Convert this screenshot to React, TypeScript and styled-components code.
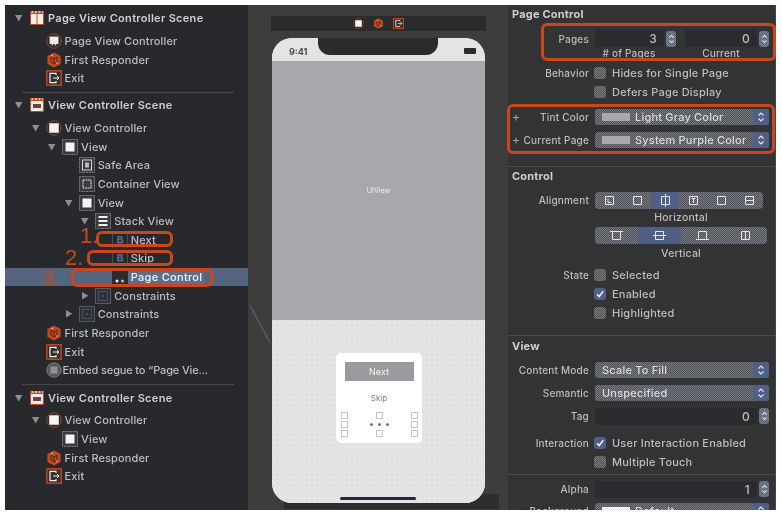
import React from "react";
import styled, { createGlobalStyle } from "styled-components";

const Global = createGlobalStyle`
  html, body { margin: 0; padding: 0; background: #fff; }
  body { font-family: "Inter", "Liberation Sans", sans-serif; }
`;

const ORANGE = "#c8481c";
const BLUE = "#4f5f85";

const Page = styled.div`
  position: relative;
  width: 782px;
  height: 520px;
  overflow: hidden;
  background: #fff;
  box-sizing: border-box;
  padding: 5px 6px 10px 5px;
  display: flex;
  filter: blur(0.4px);
`;

/* ---------- outline ---------- */
const Outline = styled.aside`
  width: 243px;
  flex: none;
  background: #28292c;
  padding-top: 4px;
  box-sizing: border-box;
`;
const Row = styled.div<{ $level: number; $selected?: boolean; $scene?: boolean; $mt?: number }>`
  height: 18.66px;
  margin-top: ${(p) => p.$mt ?? 0}px;
  display: flex;
  align-items: center;
  padding-left: ${(p) => 8 + p.$level * 16.55}px;
  background: ${(p) => (p.$selected ? "#55647f" : "transparent")};
  color: ${(p) => (p.$selected ? "#f2f2f4" : p.$scene ? "#cfcfd0" : "#bdbdbe")};
  font-size: 11px;
  font-weight: ${(p) => (p.$scene ? 600 : 500)};
  letter-spacing: ${(p) => (p.$scene ? "0.3px" : "0.12px")};
  white-space: nowrap;
`;
const Caret = styled.span`
  width: 16px;
  flex: none;
  display: flex;
  padding-left: 2px;
  box-sizing: border-box;
`;
const Label = styled.span<{ $selected?: boolean; $tight?: boolean }>`
  margin-left: ${(p) => (p.$tight ? 1 : 3)}px;
  ${(p) => p.$tight && "letter-spacing:-0.15px;"}
  ${(p) => p.$selected && "background:#5f6d8a;padding:1px 2px 1px 3px;margin-left:0;letter-spacing:0.3px;"}
`;
const Divider = styled.div<{ $mt: number; $mb: number }>`
  height: 1px;
  margin: ${(p) => p.$mt}px 14px ${(p) => p.$mb}px 17px;
  background: #47484a;
`;

const Tri = ({ open }: { open: boolean }) => (
  <svg width="8" height="8" viewBox="0 0 8 8">
    <path d={open ? "M0 1h7.4L3.7 7.5z" : "M1 0l6.4 3.8L1 7.6z"} fill="#8f8f90" />
  </svg>
);

type Kind = "scene" | "pvcScene" | "pvc" | "vc" | "fr" | "exit" | "view" | "safe" | "container" | "stack" | "button" | "dots" | "constraints" | "embed";

const Glyph = ({ kind }: { kind: Kind }) => {
  const box = <rect x=".5" y=".5" width="15" height="15" fill="#3a3b3e" stroke="#77787b" strokeDasharray="2 .6" />;
  switch (kind) {
    case "scene":
    case "pvcScene":
      return (
        <svg width="16" height="16" viewBox="0 0 16 16">
          <rect x="1" y="1" width="14" height="14" rx="1" fill={ORANGE} />
          <path d="M2.5 2h2M6 2h2M9.5 2h2M13 2h1" stroke="#f0dccf" strokeWidth="1.4" />
          {kind === "scene" ? (
            <>
              <rect x="2" y="4" width="12" height="10" fill="#ededed" />
              <rect x="4" y="7" width="8" height="4" fill="#5a4a42" />
            </>
          ) : (
            <>
              <rect x="2" y="4" width="5.5" height="10" fill="#f0f0f0" />
              <rect x="8.5" y="4" width="5.5" height="10" fill="#f0f0f0" />
            </>
          )}
        </svg>
      );
    case "pvc":
      return (
        <svg width="16" height="16" viewBox="0 0 16 16">
          <circle cx="8" cy="8" r="7.2" fill="#302d2c" stroke={ORANGE} strokeDasharray="1.6 .6" />
          <rect x="3.6" y="3.6" width="8.8" height="7.4" fill="#efefef" />
          <circle cx="6.5" cy="11.8" r=".8" fill="#efefef" />
          <circle cx="9.5" cy="11.8" r=".8" fill="#efefef" />
        </svg>
      );
    case "vc":
      return (
        <svg width="16" height="16" viewBox="0 0 16 16">
          <circle cx="8" cy="8" r="7.2" fill="#302d2c" stroke={ORANGE} strokeDasharray="1.6 .6" />
          <rect x="3.2" y="3.2" width="9.6" height="9.6" rx=".8" fill="#f4f4f4" />
        </svg>
      );
    case "fr":
      return (
        <svg width="16" height="16" viewBox="0 0 16 16">
          <path d="M8 .6l6.6 3.4v8L8 15.4 1.4 12V4z" fill={ORANGE} />
          <path d="M5 5l3 2 3-2M8 7v4M5 5v5l3 2 3-2V5" fill="none" stroke="#3d2a22" />
          <circle cx="6" cy="3.4" r=".8" fill="#eec4ad" />
          <circle cx="11" cy="11" r=".8" fill="#eec4ad" />
        </svg>
      );
    case "exit":
      return (
        <svg width="16" height="16" viewBox="0 0 16 16">
          <rect x=".8" y=".8" width="14.4" height="14.4" fill="#34302e" stroke={ORANGE} strokeWidth="1.4" />
          <path d="M10 5V3.4H4v9.2h6V11" fill="none" stroke="#f0f0f0" strokeWidth="1.2" />
          <path d="M7 8h6M11 6l2 2-2 2" fill="none" stroke="#f0f0f0" />
        </svg>
      );
    case "view":
      return (
        <svg width="16" height="16" viewBox="0 0 16 16">
          {box}
          <rect x="3.5" y="3.5" width="9" height="9" fill="#f4f4f4" />
        </svg>
      );
    case "safe":
      return (
        <svg width="16" height="16" viewBox="0 0 16 16">
          {box}
          <rect x="3.5" y="3" width="9" height="10" fill="none" stroke="#d8d8d8" />
          <rect x="6" y="5.5" width="4" height="5" fill="#bbb" />
        </svg>
      );
    case "container":
      return (
        <svg width="16" height="16" viewBox="0 0 16 16">
          {box}
          <rect x="4" y="4" width="8" height="8" fill="none" stroke="#dcdcdc" strokeDasharray="2 .5" />
        </svg>
      );
    case "stack":
      return (
        <svg width="16" height="16" viewBox="0 0 16 16">
          {box}
          <rect x="3.5" y="3" width="9" height="2" fill="#f2f2f2" />
          <rect x="3.5" y="7" width="9" height="2" fill="#f2f2f2" />
          <rect x="3.5" y="11" width="9" height="2" fill="#f2f2f2" />
        </svg>
      );
    case "button":
      return (
        <svg width="16" height="16" viewBox="0 0 16 16">
          <path d="M.5 0v16M15.5 0v16" stroke="#4a4b4f" />
          <path d="M5.2 4h3.6a1.8 1.8 0 011 3.4 2 2 0 01-.6 4H5.2zM6.8 5.4v1.4h1.6a.7.7 0 000-1.4zM6.8 8.2v1.8h1.9a.9.9 0 000-1.8z" fill="#566894" fillRule="evenodd" />
        </svg>
      );
    case "dots":
      return (
        <svg width="16" height="16" viewBox="0 0 16 16">
          <rect width="16" height="16" fill="#2b2c30" />
          <circle cx="5" cy="12" r="1.5" fill="#f2f2f2" />
          <circle cx="10.5" cy="12" r="1.5" fill="#bbb" />
        </svg>
      );
    case "constraints":
      return (
        <svg width="16" height="16" viewBox="0 0 16 16">
          <rect x=".5" y=".5" width="15" height="15" fill="#2f3138" stroke="#545a6c" />
          <rect x="3.5" y="3.5" width="9" height="9" fill="none" stroke="#5d6f9c" strokeDasharray="1 1" />
          <rect x="7.5" y="7.5" width="1" height="1" fill="#8fa0c8" />
        </svg>
      );
    case "embed":
      return (
        <svg width="16" height="16" viewBox="0 0 16 16">
          <circle cx="8" cy="8" r="7.2" fill="#56575a" stroke="#77787b" />
          <rect x="4" y="4" width="8" height="8" fill="#909194" stroke="#5c5d60" />
        </svg>
      );
  }
};

const IconBox = styled.span`
  width: 16px;
  height: 16px;
  flex: none;
  display: block;
  & > svg { display: block; }
`;

type Node = { t: string; k: Kind; l: number; c?: "open" | "closed"; sel?: boolean; scene?: boolean; mt?: number; tight?: boolean };

const group1: Node[] = [
  { t: "Page View Controller Scene", k: "pvcScene", l: 0, c: "open", scene: true },
  { t: "Page View Controller", k: "pvc", l: 1, mt: 4 },
  { t: "First Responder", k: "fr", l: 1 },
  { t: "Exit", k: "exit", l: 1 },
];
const group2: Node[] = [
  { t: "View Controller Scene", k: "scene", l: 0, c: "open", scene: true },
  { t: "View Controller", k: "vc", l: 1, c: "open", mt: 3.8 },
  { t: "View", k: "view", l: 2, c: "open" },
  { t: "Safe Area", k: "safe", l: 3 },
  { t: "Container View", k: "container", l: 3 },
  { t: "View", k: "view", l: 3, c: "open" },
  { t: "Stack View", k: "stack", l: 4, c: "open" },
  { t: "Next", k: "button", l: 5 },
  { t: "Skip", k: "button", l: 5 },
  { t: "Page Control", k: "dots", l: 5, sel: true },
  { t: "Constraints", k: "constraints", l: 4, c: "closed" },
  { t: "Constraints", k: "constraints", l: 3, c: "closed" },
  { t: "First Responder", k: "fr", l: 1 },
  { t: "Exit", k: "exit", l: 1 },
  { t: "Embed segue to “Page Vie...", k: "embed", l: 1, tight: true },
];
const group3: Node[] = [
  { t: "View Controller Scene", k: "scene", l: 0, c: "open", scene: true },
  { t: "View Controller", k: "vc", l: 1, c: "open", mt: 4 },
  { t: "View", k: "view", l: 2 },
  { t: "First Responder", k: "fr", l: 1 },
  { t: "Exit", k: "exit", l: 1 },
];

const Rows = ({ items }: { items: Node[] }) => (
  <>
    {items.map((n, i) => (
      <Row key={i} $level={n.l} $selected={n.sel} $scene={n.scene} $mt={n.mt}>
        <Caret>{n.c && <Tri open={n.c === "open"} />}</Caret>
        <IconBox><Glyph kind={n.k} /></IconBox>
        <Label $selected={n.sel} $tight={n.tight}>{n.t}</Label>
      </Row>
    ))}
  </>
);

/* ---------- canvas ---------- */
const Canvas = styled.main`
  position: relative;
  width: 260px;
  flex: none;
  background: #3e3d3b;
  padding: 11px 22px 0 23px;
  box-sizing: border-box;
  display: flex;
  flex-direction: column;
`;
const SceneDock = styled.div`
  height: 15px;
  background: #2a2b2d;
  display: flex;
  align-items: center;
  justify-content: center;
  gap: 9px;
  margin-bottom: 7px;
  flex: none;
`;
const DockIcon = styled.span`
  width: 11px;
  height: 11px;
  flex: none;
  & > svg { display: block; width: 11px; height: 11px; }
`;
const Phone = styled.div`
  position: relative;
  z-index: 1;
  width: 213px;
  height: 465px;
  margin-left: 1px;
  border-radius: 20px;
  overflow: hidden;
  background: #e3e3e3;
  display: flex;
  flex-direction: column;
  flex: none;
`;
const Status = styled.div`
  height: 23px;
  box-sizing: border-box;
  flex: none;
  background: #e4e4e4;
  display: flex;
  align-items: center;
  justify-content: space-between;
  padding: 3px 9px 0 17px;
  font-size: 9px;
  font-weight: 700;
  color: #4a4a4c;
`;
const Notch = styled.div`
  position: absolute;
  left: 46px;
  top: -1px;
  width: 120px;
  height: 18px;
  background: #2a2b2d;
  border-radius: 0 0 12px 12px;
`;
const Battery = styled.span`
  width: 12px;
  height: 6px;
  background: #2c2c2e;
  border-radius: 1px;
`;
const Gray = styled.div`
  height: 259px;
  flex: none;
  background: #a9a7ab;
  display: flex;
  align-items: center;
  justify-content: center;
  color: #f0f0f0;
  font-size: 7px;
`;
const Lower = styled.div`
  flex: 1;
  display: flex;
  flex-direction: column;
  align-items: center;
  padding-top: 33px;
  background-color: #e3e3e3;
  background-image: radial-gradient(circle, #f4f4f4 0.6px, transparent 0.8px);
  background-size: 5px 5px;
  position: relative;
`;
const Card = styled.div`
  width: 86px;
  height: 90px;
  background: #fff;
  border-radius: 5px;
  box-sizing: border-box;
  padding: 9px 8px 0 9px;
  display: flex;
  flex-direction: column;
  align-items: center;
`;
const NextBtn = styled.div`
  align-self: stretch;
  height: 19px;
  background: #9c9a9e;
  color: #f4f4f4;
  font-size: 9px;
  display: flex;
  align-items: center;
  justify-content: center;
`;
const SkipLabel = styled.div`
  font-size: 8px;
  color: #77777a;
  margin-top: 12px;
  line-height: 10px;
`;
const HandleGrid = styled.div`
  margin-top: 8px;
  width: 78px;
  display: grid;
  grid-template-columns: 8px 1fr 8px;
  grid-template-rows: repeat(3, 9px);
  align-items: center;
  justify-items: center;
`;
const Handle = styled.span`
  width: 7px;
  height: 7px;
  border: 1px solid #c4c4c4;
  box-sizing: border-box;
`;
const PageDots = styled.span`
  display: flex;
  gap: 5px;
`;
const PageDot = styled.span`
  width: 3px;
  height: 3px;
  border-radius: 50%;
  background: #77777a;
`;
const HomeBar = styled.div`
  position: absolute;
  left: 68px;
  bottom: 3px;
  width: 76px;
  height: 3px;
  background: #24283a;
  border-radius: 2px;
`;
const UnderBar = styled.div`
  position: absolute;
  left: 36px;
  top: 489px;
  width: 215px;
  height: 15px;
  background: #2d2d2f;
`;
const Segue = styled.svg`
  position: absolute;
  left: 0;
  top: 298px;
`;

/* ---------- inspector ---------- */
const dither = (a: string, b: string) =>
  `repeating-conic-gradient(${a} 0 25%, ${b} 0 50%) 0 0 / 2px 2px`;

const Inspector = styled.section`
  width: 268px;
  flex: none;
  overflow: hidden;
  background: ${dither("#2c2d2f", "#3a3a3b")};
  box-sizing: border-box;
  padding-left: 4px;
  border-right: 1px solid #3b4660;
  color: #bdbdbe;
  font-size: 11px;
  font-weight: 500;
  letter-spacing: 0.2px;
`;
const SectionTitle = styled.div<{ $mt: number }>`
  height: 18px;
  margin-top: ${(p) => p.$mt}px;
  display: flex;
  align-items: center;
  font-weight: 700;
  color: #cfcfd0;
`;
const Sep = styled.div<{ $mt: number }>`
  height: 1px;
  margin: ${(p) => p.$mt}px 0 0 -4px;
  background: #4b4b4c;
`;
const PropRow = styled.div<{ $mt: number; $h?: number }>`
  height: ${(p) => p.$h ?? 18}px;
  margin-top: ${(p) => p.$mt}px;
  display: grid;
  grid-template-columns: 77px 1fr;
  column-gap: 6px;
  align-items: center;
`;
const PropLabel = styled.span`
  display: flex;
  justify-content: space-between;
  align-items: center;
  white-space: nowrap;
  font-size: 10px;
`;
const Plus = styled.span`
  color: #a5a5a6;
  font-size: 12px;
  font-weight: 400;
`;
const Cell = styled.div`
  display: flex;
  align-items: center;
  min-width: 0;
  margin-right: 6px;
`;
const NumField = styled.div<{ $w: number; $gap?: number }>`
  width: ${(p) => p.$w}px;
  margin-left: ${(p) => p.$gap ?? 0}px;
  height: 17px;
  box-sizing: border-box;
  padding-right: 7px;
  flex: none;
  background: ${dither("#242528", "#323234")};
  display: flex;
  align-items: center;
  justify-content: flex-end;
  font-size: 12px;
`;
const Stepper = styled.span`
  width: 10px;
  height: 16px;
  flex: none;
  margin-left: 2px;
  border-radius: 3px;
  background: ${dither("#5a6478", "#7c8290")};
  display: flex;
  align-items: center;
  justify-content: center;
`;
const Chevrons = ({ w = 8 }: { w?: number }) => (
  <svg width={w} height="12" viewBox="0 0 8 12">
    <path d="M1.5 4.5L4 2l2.5 2.5M1.5 7.5L4 10l2.5-2.5" fill="none" stroke="#e4e6ea" strokeWidth="1.2" />
  </svg>
);
const SubLabels = styled.div`
  display: grid;
  grid-template-columns: 68px 116px;
  font-size: 10px;
  text-align: center;
`;
const CheckBox = styled.span<{ $on?: boolean }>`
  width: 12px;
  height: 12px;
  flex: none;
  margin: 0 6px 0 -1px;
  border-radius: 3px;
  background: ${(p) => (p.$on ? BLUE : dither("#555", "#77787a"))};
  display: flex;
  align-items: center;
  justify-content: center;
`;
const Check = () => (
  <svg width="10" height="10" viewBox="0 0 10 10">
    <path d="M2 5.2l2.2 2.3L8.2 2.2" fill="none" stroke="#f2f2f2" strokeWidth="1.5" />
  </svg>
);
const Select = styled.div`
  flex: 1;
  height: 16px;
  border-radius: 3px;
  background: ${dither("#4d5058", "#7a7b80")};
  display: flex;
  align-items: center;
  overflow: hidden;
  color: #dadbdd;
  padding-left: 7px;
`;
const Swatch = styled.span<{ $c: string }>`
  width: 28px;
  height: 8px;
  flex: none;
  background: ${(p) => p.$c};
  margin-right: 5px;
`;
const SelectText = styled.span`
  flex: 1;
  white-space: nowrap;
`;
const SelectArrow = styled.span`
  width: 16px;
  height: 16px;
  flex: none;
  background: ${BLUE};
  display: flex;
  align-items: center;
  justify-content: center;
`;
const Segments = styled.div<{ $w: number }>`
  width: ${(p) => p.$w}px;
  height: 17px;
  border-radius: 4px;
  overflow: hidden;
  display: flex;
  background: ${dither("#4d5058", "#7a7b80")};
`;
const Segment = styled.span<{ $on?: boolean }>`
  flex: 1;
  display: flex;
  align-items: center;
  justify-content: center;
  background: ${(p) => (p.$on ? BLUE : "transparent")};
`;
const Caption = styled.div<{ $mt: number; $ml: number }>`
  margin: ${(p) => p.$mt}px 0 0 ${(p) => p.$ml}px;
  width: 172px;
  height: 14px;
  line-height: 14px;
  text-align: center;
  font-size: 10.5px;
`;
const SegGlyph = ({ d }: { d: string }) => (
  <svg width="13" height="13" viewBox="0 0 13 13">
    <path d={d} fill="none" stroke="#e6e6e8" strokeWidth="1" />
  </svg>
);
const squareD = "M2.5 2.5h8v8h-8z";

const Field = ({ label, children, mt, h, plus }: { label?: string; children?: React.ReactNode; mt: number; h?: number; plus?: boolean }) => (
  <PropRow $mt={mt} $h={h}>
    <PropLabel>{plus ? <Plus>+</Plus> : <span />}{label}</PropLabel>
    <Cell>{children}</Cell>
  </PropRow>
);

/* ---------- annotations ---------- */
const Mark = styled.div<{ $x: number; $y: number; $w: number; $h: number; $r?: number }>`
  position: absolute;
  left: ${(p) => p.$x}px;
  top: ${(p) => p.$y}px;
  width: ${(p) => p.$w}px;
  height: ${(p) => p.$h}px;
  box-sizing: border-box;
  border: 3px solid ${ORANGE};
  border-radius: ${(p) => p.$r ?? 6}px;
  pointer-events: none;
`;
const Num = styled.div<{ $x: number; $y: number }>`
  position: absolute;
  left: ${(p) => p.$x}px;
  top: ${(p) => p.$y}px;
  color: ${ORANGE};
  font: 300 22px/22px "Liberation Sans", sans-serif;
`;

export default function App() {
  return (
    <Page>
      <Global />
      <Outline>
        <Rows items={group1} />
        <Divider $mt={4.2} $mb={3.3} />
        <Rows items={group2} />
        <Divider $mt={4.4} $mb={3.3} />
        <Rows items={group3} />
      </Outline>

      <Canvas>
        <Segue width="30" height="50" viewBox="0 0 30 50">
          <path d="M2 2l20 38" stroke="#5a6a90" fill="none" />
        </Segue>
        <UnderBar />
        <SceneDock>
          <DockIcon><Glyph kind="vc" /></DockIcon>
          <DockIcon><Glyph kind="fr" /></DockIcon>
          <DockIcon><Glyph kind="exit" /></DockIcon>
        </SceneDock>
        <Phone>
          <Status>
            <span>9:41</span>
            <Battery />
          </Status>
          <Notch />
          <Gray>UIView</Gray>
          <Lower>
            <Card>
              <NextBtn>Next</NextBtn>
              <SkipLabel>Skip</SkipLabel>
              <HandleGrid>
                <Handle /><Handle /><Handle />
                <Handle /><PageDots><PageDot /><PageDot /><PageDot /></PageDots><Handle />
                <Handle /><Handle /><Handle />
              </HandleGrid>
            </Card>
            <HomeBar />
          </Lower>
        </Phone>
      </Canvas>

      <Inspector>
        <SectionTitle $mt={0}>Page Control</SectionTitle>
        <Field label="Pages" mt={7} h={16}>
          <NumField $w={69}>3</NumField><Stepper><Chevrons w={7} /></Stepper>
          <NumField $w={72} $gap={9}>0</NumField><Stepper><Chevrons w={7} /></Stepper>
        </Field>
        <Field mt={0} h={14}>
          <SubLabels><span># of Pages</span><span>Current</span></SubLabels>
        </Field>
        <Field label="Behavior" mt={4}>
          <CheckBox />Hides for Single Page
        </Field>
        <Field mt={1}>
          <CheckBox />Defers Page Display
        </Field>
        <Field label="Tint Color" mt={7} h={17} plus>
          <Select><Swatch $c="#aaa8ac" /><SelectText>Light Gray Color</SelectText><SelectArrow><Chevrons /></SelectArrow></Select>
        </Field>
        <Field label="Current Page" mt={6} h={17} plus>
          <Select><Swatch $c="#aaa8ac" /><SelectText>System Purple Color</SelectText><SelectArrow><Chevrons /></SelectArrow></Select>
        </Field>
        <Sep $mt={18} />
        <SectionTitle $mt={0}>Control</SectionTitle>
        <Field label="Alignment" mt={6}>
          <Segments $w={168}>
            <Segment><SegGlyph d={`${squareD}M5 4.5v4h3`} /></Segment>
            <Segment><SegGlyph d={squareD} /></Segment>
            <Segment $on><SegGlyph d={`${squareD}M6.5 0v13`} /></Segment>
            <Segment><SegGlyph d={`${squareD}M4.5 4.5h4M6.5 4.5v4.5`} /></Segment>
            <Segment><SegGlyph d={squareD} /></Segment>
            <Segment><SegGlyph d={`${squareD}M2.5 6.5h8`} /></Segment>
          </Segments>
        </Field>
        <Caption $mt={2} $ml={83}>Horizontal</Caption>
        <Field mt={1}>
          <Segments $w={172}>
            <Segment><SegGlyph d={`${squareD}M0 2.5h13`} /></Segment>
            <Segment $on><SegGlyph d={`${squareD}M0 6.5h13`} /></Segment>
            <Segment><SegGlyph d={`${squareD}M0 10.5h13`} /></Segment>
            <Segment><SegGlyph d={`${squareD}M6.5 3v7`} /></Segment>
          </Segments>
        </Field>
        <Caption $mt={3} $ml={83}>Vertical</Caption>
        <Field label="State" mt={5}>
          <CheckBox />Selected
        </Field>
        <Field mt={1}>
          <CheckBox $on><Check /></CheckBox>Enabled
        </Field>
        <Field mt={1}>
          <CheckBox />Highlighted
        </Field>
        <Sep $mt={13} />
        <SectionTitle $mt={1}>View</SectionTitle>
        <Field label="Content Mode" mt={6}>
          <Select>Scale To Fill<SelectText /><SelectArrow><Chevrons /></SelectArrow></Select>
        </Field>
        <Field label="Semantic" mt={4.5}>
          <Select>Unspecified<SelectText /><SelectArrow><Chevrons /></SelectArrow></Select>
        </Field>
        <Field label="Tag" mt={5.5}>
          <NumField $w={162}>0</NumField><Stepper><Chevrons w={7} /></Stepper>
        </Field>
        <Field label="Interaction" mt={9}>
          <CheckBox $on><Check /></CheckBox>User Interaction Enabled
        </Field>
        <Field mt={0.5}>
          <CheckBox />Multiple Touch
        </Field>
        <Sep $mt={3} />
        <Field label="Alpha" mt={5.5}>
          <NumField $w={162}>1</NumField><Stepper><Chevrons w={7} /></Stepper>
        </Field>
        <Field label="Background" mt={4} plus>
          <Select><Swatch $c="#f2f2f2" /><SelectText>Default</SelectText><SelectArrow><Chevrons /></SelectArrow></Select>
        </Field>
      </Inspector>

      <Mark $x={96} $y={231} $w={77} $h={16} />
      <Mark $x={87} $y={250} $w={86} $h={16} />
      <Mark $x={71} $y={268} $w={142} $h={19} />
      <Mark $x={541} $y={23} $w={235} $h={38} />
      <Mark $x={507} $y={104} $w={268} $h={50} />
      <Num $x={80} $y={225}>1.</Num>
      <Num $x={65} $y={247}>2.</Num>
      <Num $x={42} $y={267}>3.</Num>
    </Page>
  );
}
